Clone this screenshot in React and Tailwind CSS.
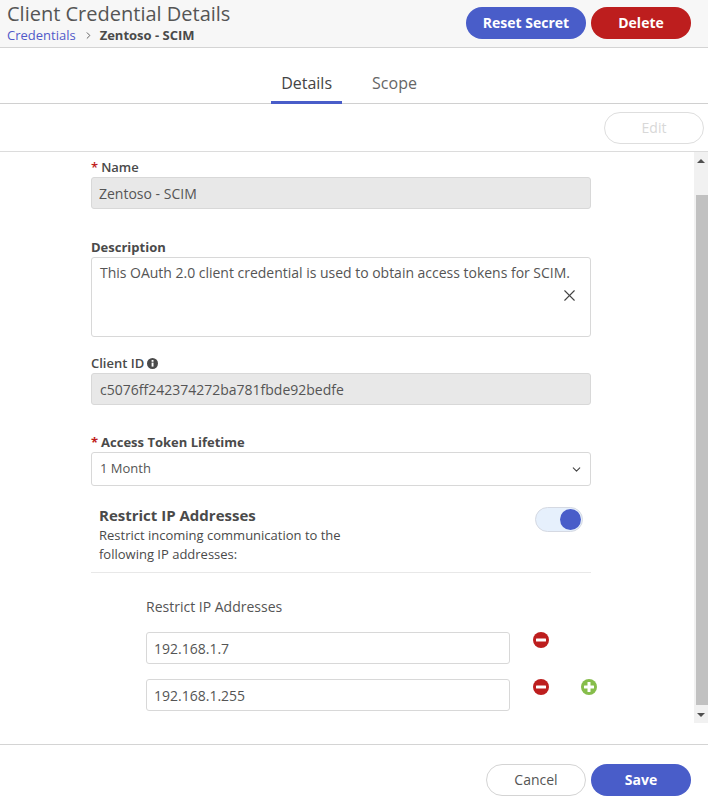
import { useState } from "react"
import { ChevronDown, ChevronRight, X } from "lucide-react"

function RoundIcon({ color, plus }) {
  return (
    <svg width="16" height="16" viewBox="0 0 16 16" className="block">
      <circle cx="8" cy="8" r="8" fill={color} />
      <rect x="3" y="6.5" width="10" height="3" rx="0.5" fill="#fff" />
      {plus && <rect x="6.5" y="3" width="3" height="10" rx="0.5" fill="#fff" />}
    </svg>
  )
}

function Label({ required, bold, children }) {
  return (
    <label className={`flex h-5 items-center text-[13px] leading-5 text-[#4a4a4a] ${bold ? "font-bold" : "font-semibold"}`}>
      {required && <span className="mr-[3px] text-[#c01c1c]">*</span>}
      {children}
    </label>
  )
}

function App() {
  const [restrict, setRestrict] = useState(true)
  const [ips, setIps] = useState(["192.168.1.7", "192.168.1.255"])

  return (
    <div className="flex h-[800px] w-[708px] flex-col overflow-hidden bg-white font-['Open_Sans',sans-serif] text-[#4a4a4a]">

      {/* HEADER */}
      <div className="flex h-[48px] shrink-0 items-start justify-between border-b border-[#d4d4d4] bg-[#f7f7f7] pl-[7px] pr-[17px]">
        <div>
          <h1 className="text-[20px] leading-[27px] text-[#555]">Client Credential Details</h1>
          <div className="flex items-center text-[13px] leading-[17px]">
            <a className="text-[#5159c9]">Credentials</a>
            <ChevronRight size={11} className="ml-[7px] mr-[6px] text-[#555]" />
            <span className="font-bold">Zentoso - SCIM</span>
          </div>
        </div>
        <div className="mt-[7px] flex gap-[5px]">
          <button className="h-[32px] w-[120px] rounded-full bg-[#495dc9] text-sm font-bold text-white">Reset Secret</button>
          <button className="h-[32px] w-[100px] rounded-full bg-[#bd1e1e] text-sm font-bold text-white">Delete</button>
        </div>
      </div>

      {/* TABS */}
      <div className="flex h-[56px] shrink-0 justify-center gap-[30px] border-b border-[#d0d0d0] pr-[20px]">
        <button className="-mb-[1px] h-[56px] w-[71px] border-b-[3px] border-[#495dc9] pt-[17px] text-base text-[#444]">Details</button>
        <button className="h-[55px] pt-[15px] text-base text-[#666]">Scope</button>
      </div>

      {/* EDIT ROW */}
      <div className="flex h-[48px] shrink-0 items-start justify-end border-b border-[#dcdcdc] pr-[4px] pt-[8px]">
        <button disabled className="h-[32px] w-[100px] rounded-full border border-[#dedede] text-sm text-[#d8d8d8]">Edit</button>
      </div>

      <div className="flex h-[572px] shrink-0">
        {/* FORM */}
        <div className="w-[694px] shrink-0 pl-[91px] pt-[5px]">
          <div className="w-[500px]">
            <Label required>Name</Label>
            <input readOnly value="Zentoso - SCIM" className="h-[32px] w-full rounded-[3px] border border-[#d8d8d8] bg-[#e8e8e8] pl-[7px] pr-2 text-sm text-[#555] outline-none" />

            <div className="mt-[28px]"><Label bold>Description</Label></div>
            <div className="relative h-[80px] w-full rounded-[3px] border border-[#d8d8d8] px-2 pt-[5px] text-sm leading-5 tracking-[-0.015px] text-[#555]">
              This OAuth 2.0 client credential is used to obtain access tokens for SCIM.
              <X size={19} strokeWidth={1.4} className="absolute right-[11px] top-[28px] text-[#444]" />
            </div>

            <div className="mt-[16px]">
              <Label>
                Client ID
                <svg width="11" height="11" viewBox="0 0 11 11" className="ml-[3px]">
                  <circle cx="5.5" cy="5.5" r="5.5" fill="#4a4a4a" />
                  <rect x="4.6" y="4.6" width="1.9" height="4" fill="#fff" />
                  <rect x="4.6" y="2" width="1.9" height="1.8" fill="#fff" />
                </svg>
              </Label>
            </div>
            <input readOnly value="c5076ff242374272ba781fbde92bedfe" className="h-[32px] w-full rounded-[3px] border border-[#d8d8d8] bg-[#e8e8e8] pl-[8px] pr-2 text-sm text-[#555] outline-none" />

            <div className="mt-[27px]"><Label required bold>Access Token Lifetime</Label></div>
            <div className="flex h-[34px] w-full items-center justify-between rounded-[3px] border border-[#d8d8d8] pl-2 pr-[7px] text-[13px] text-[#555]">
              1 Month
              <ChevronDown size={13} className="text-[#444]" />
            </div>

            {/* RESTRICT TOGGLE */}
            <div className="flex h-[87px] justify-between border-b border-[#e8e8e8] pl-2 pr-[8px] pt-[19px]">
              <div>
                <div className="text-[15px] font-bold leading-[20px] text-[#4a4a4a]">Restrict IP Addresses</div>
                <p className="mt-[1px] w-[260px] text-[13px] leading-[19px] text-[#4a4a4a]">Restrict incoming communication to the following IP addresses:</p>
              </div>
              <button
                onClick={() => setRestrict(!restrict)}
                className="mt-[2px] flex h-[25px] w-[48px] items-center justify-end rounded-full border border-[#d5d9e2] bg-[#e6f0fc] pr-[1px]"
              >
                <span className="h-[21px] w-[21px] rounded-full bg-[#495dc9]"></span>
              </button>
            </div>

            {/* IP LIST */}
            <div className="pl-[55px] pt-[25px]">
              <div className="text-sm leading-[18px] text-[#555]">Restrict IP Addresses</div>
              <div className="mt-[16px] flex flex-col gap-[15px]">
                {ips.map((ip, i) => (
                  <div key={ip} className="flex items-start">
                    <input
                      readOnly
                      value={ip}
                      className="h-[32px] w-[364px] shrink-0 rounded-[3px] border border-[#d8d8d8] pl-[7px] pr-2 text-sm text-[#555] outline-none"
                    />
                    <button className="ml-[23px] shrink-0" onClick={() => setIps(ips.filter((x) => x !== ip))}>
                      <RoundIcon color="#bd1e1e" />
                    </button>
                    {i === ips.length - 1 && (
                      <button className="ml-[32px] shrink-0">
                        <RoundIcon color="#86bd4b" plus />
                      </button>
                    )}
                  </div>
                ))}
              </div>
            </div>
          </div>
        </div>

        {/* SCROLLBAR */}
        <div className="flex h-[571px] w-[14px] shrink-0 flex-col items-center bg-[#f1f1f1]">
          <div className="flex h-[17px] items-center justify-center">
            <div className="h-0 w-0 border-x-[4px] border-b-[4px] border-x-transparent border-b-[#505050]"></div>
          </div>
          <div className="mt-[26px] h-[510px] w-[12px] self-end bg-[#c1c1c1]"></div>
          <div className="flex h-[18px] items-center justify-center pt-[2px]">
            <div className="h-0 w-0 border-x-[4px] border-t-[4px] border-x-transparent border-t-[#505050]"></div>
          </div>
        </div>
      </div>

      {/* FOOTER */}
      <div className="mt-[20px] flex h-[56px] shrink-0 items-start justify-end gap-[5px] border-t border-[#d4d4d4] pr-[17px] pt-[19px]">
        <button className="h-[32px] w-[100px] rounded-full border border-[#d4d4d4] text-sm text-[#555]">Cancel</button>
        <button className="h-[32px] w-[100px] rounded-full bg-[#495dc9] text-sm font-bold text-white">Save</button>
      </div>

    </div>
  )
}

export default App
